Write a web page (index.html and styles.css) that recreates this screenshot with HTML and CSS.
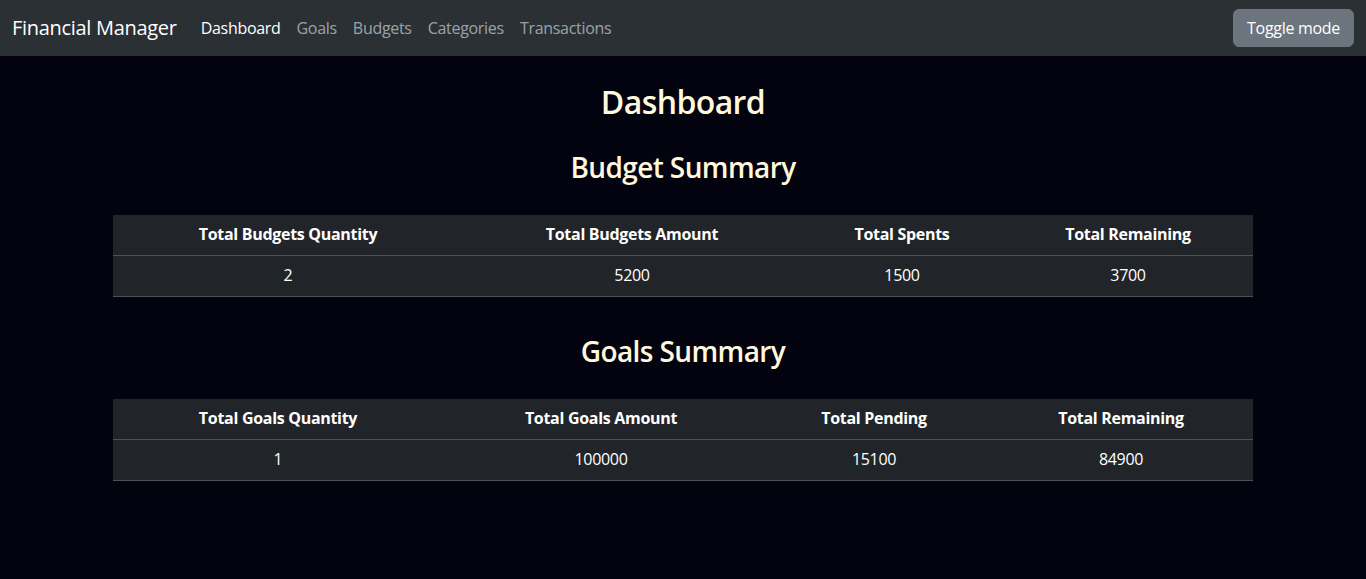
FILE: index.html
```html
<!DOCTYPE html>
<html lang="en">
<head>
<meta charset="utf-8">
<title>Financial Manager</title>
<link rel="stylesheet" href="styles.css">
</head>
<body>
<nav class="navbar">
  <div class="nav-left">
    <a class="brand" href="#">Financial Manager</a>
    <ul class="nav-links">
      <li><a class="nav-link active" href="#">Dashboard</a></li>
      <li><a class="nav-link" href="#">Goals</a></li>
      <li><a class="nav-link" href="#">Budgets</a></li>
      <li><a class="nav-link" href="#">Categories</a></li>
      <li><a class="nav-link" href="#">Transactions</a></li>
    </ul>
  </div>
  <button class="btn-toggle" type="button">Toggle mode</button>
</nav>
<main class="main">
  <h2 class="page-title">Dashboard</h2>
  <h3 class="section-title">Budget Summary</h3>
  <table class="summary budgets">
    <thead>
      <tr><th>Total Budgets Quantity</th><th>Total Budgets Amount</th><th>Total Spents</th><th>Total Remaining</th></tr>
    </thead>
    <tbody>
      <tr><td>2</td><td>5200</td><td>1500</td><td>3700</td></tr>
    </tbody>
  </table>
  <h3 class="section-title second">Goals Summary</h3>
  <table class="summary goals">
    <thead>
      <tr><th>Total Goals Quantity</th><th>Total Goals Amount</th><th>Total Pending</th><th>Total Remaining</th></tr>
    </thead>
    <tbody>
      <tr><td>1</td><td>100000</td><td>15100</td><td>84900</td></tr>
    </tbody>
  </table>
</main>
</body>
</html>
```
FILE: styles.css
```css
* { box-sizing: border-box; }
html, body {
  margin: 0;
  padding: 0;
}
body {
  background: #03020f;
  color: #dee2e6;
  font-family: "Open Sans", "Noto Sans", sans-serif;
  font-size: 16px;
  line-height: 1.5;
  letter-spacing: -0.3px;
  min-height: 579px;
}
.navbar {
  height: 56px;
  background: #2b3035;
  display: flex;
  align-items: center;
  justify-content: space-between;
  padding: 0 12px;
}
.nav-left {
  display: flex;
  align-items: center;
}
.brand {
  color: #fff;
  font-size: 20px;
  text-decoration: none;
  margin-right: 16px;
  line-height: 30px;
}
.nav-links {
  display: flex;
  list-style: none;
  margin: 0;
  padding: 0;
}
.nav-link {
  display: block;
  padding: 8px 8px;
  color: rgba(222, 226, 230, 0.65);
  text-decoration: none;
}
.nav-link.active { color: #fff; }
.btn-toggle {
  font-family: inherit;
  font-size: 16px;
  letter-spacing: -0.3px;
  line-height: 24px;
  color: #fff;
  background: #6c757d;
  border: 1px solid #6c757d;
  border-radius: 6px;
  padding: 6px 13px;
}
.main {
  width: 1140px;
  margin: 0 auto;
  display: flex;
  flex-direction: column;
  align-items: stretch;
}
.page-title {
  margin: 27px 0 0;
  font-size: 32px;
  font-weight: 600;
  line-height: 1.2;
  letter-spacing: -0.6px;
  color: #fff8dc;
  text-align: center;
}
.section-title {
  margin: 30px 0 30px;
  font-size: 28px;
  font-weight: 600;
  line-height: 1.2;
  letter-spacing: -0.6px;
  color: #fff8dc;
  text-align: center;
}
.section-title.second { margin-top: 38px; }
.summary {
  width: 100%;
  border-collapse: collapse;
  background: #212529;
  color: #fff;
  text-align: center;
  table-layout: fixed;
}
.summary th, .summary td {
  padding: 7px 8px 9px;
  border-bottom: 1px solid #4d5154;
}
.summary th { font-weight: 700; }
.budgets th:nth-child(1) { width: 350px; }
.budgets th:nth-child(2) { width: 338px; }
.budgets th:nth-child(3) { width: 202px; }
.budgets th:nth-child(4) { width: 250px; }
.goals th:nth-child(1) { width: 330px; }
.goals th:nth-child(2) { width: 316px; }
.goals th:nth-child(3) { width: 230px; }
.goals th:nth-child(4) { width: 264px; }
```
